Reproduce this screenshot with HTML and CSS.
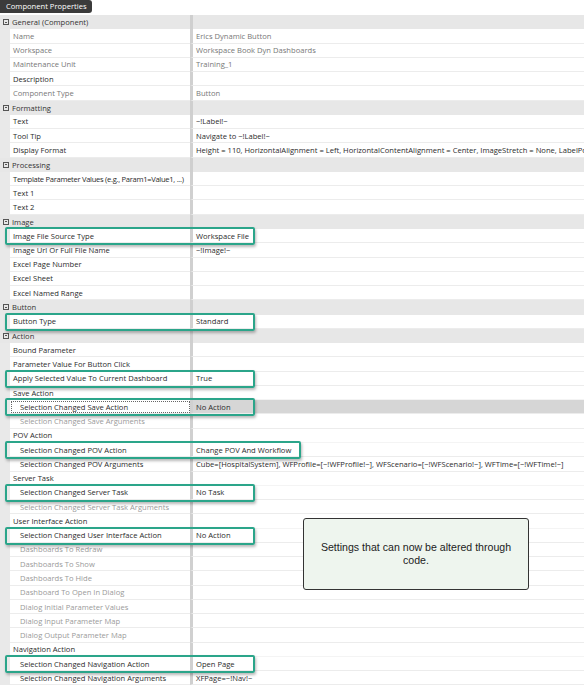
FILE: index.html
```html
<html>
  <head>
    <link rel="stylesheet" href="styles.css">
  </head>
  <body>
    <div class="tab">Component Properties</div>
    <div class="grid">
      <div class="cat"><span class="toggle"></span>General (Component)</div>
      <div class="row dim"><span class="name">Name</span><span class="value">Erics Dynamic Button</span></div>
      <div class="row dim"><span class="name">Workspace</span><span class="value">Workspace Book Dyn Dashboards</span></div>
      <div class="row dim"><span class="name">Maintenance Unit</span><span class="value">Training_1</span></div>
      <div class="row"><span class="name">Description</span><span class="value"></span></div>
      <div class="row dim"><span class="name">Component Type</span><span class="value">Button</span></div>

      <div class="cat"><span class="toggle"></span>Formatting</div>
      <div class="row"><span class="name">Text</span><span class="value">~!Label!~</span></div>
      <div class="row"><span class="name">Tool Tip</span><span class="value">Navigate to ~!Label!~</span></div>
      <div class="row"><span class="name">Display Format</span><span class="value">Height = 110, HorizontalAlignment = Left, HorizontalContentAlignment = Center, ImageStretch = None, LabelPosition = Bottom</span></div>

      <div class="cat"><span class="toggle"></span>Processing</div>
      <div class="row"><span class="name tight">Template Parameter Values (e.g., Param1=Value1, ...)</span><span class="value"></span></div>
      <div class="row"><span class="name">Text 1</span><span class="value"></span></div>
      <div class="row"><span class="name">Text 2</span><span class="value"></span></div>

      <div class="cat"><span class="toggle"></span>Image</div>
      <div class="row hl"><span class="name">Image File Source Type</span><span class="value">Workspace File</span></div>
      <div class="row"><span class="name">Image Url Or Full File Name</span><span class="value">~!Image!~</span></div>
      <div class="row"><span class="name">Excel Page Number</span><span class="value"></span></div>
      <div class="row"><span class="name">Excel Sheet</span><span class="value"></span></div>
      <div class="row"><span class="name">Excel Named Range</span><span class="value"></span></div>

      <div class="cat"><span class="toggle"></span>Button</div>
      <div class="row hl"><span class="name">Button Type</span><span class="value">Standard</span></div>

      <div class="cat"><span class="toggle"></span>Action</div>
      <div class="row"><span class="name">Bound Parameter</span><span class="value"></span></div>
      <div class="row"><span class="name">Parameter Value For Button Click</span><span class="value"></span></div>
      <div class="row hl"><span class="name">Apply Selected Value To Current Dashboard</span><span class="value">True</span></div>

      <div class="row group"><span class="name">Save Action</span><span class="value"></span></div>
      <div class="row sub hl selected"><span class="name">Selection Changed Save Action</span><span class="value">No Action</span></div>
      <div class="row sub off"><span class="name">Selection Changed Save Arguments</span><span class="value"></span></div>

      <div class="row group"><span class="name">POV Action</span><span class="value"></span></div>
      <div class="row sub hl wide"><span class="name">Selection Changed POV Action</span><span class="value">Change POV And Workflow</span></div>
      <div class="row sub"><span class="name">Selection Changed POV Arguments</span><span class="value">Cube=[HospitalSystem], WFProfile=[~!WFProfile!~], WFScenario=[~!WFScenario!~], WFTime=[~!WFTime!~]</span></div>

      <div class="row group"><span class="name">Server Task</span><span class="value"></span></div>
      <div class="row sub hl"><span class="name">Selection Changed Server Task</span><span class="value">No Task</span></div>
      <div class="row sub off"><span class="name">Selection Changed Server Task Arguments</span><span class="value"></span></div>

      <div class="row group"><span class="name">User Interface Action</span><span class="value"></span></div>
      <div class="row sub hl"><span class="name">Selection Changed User Interface Action</span><span class="value">No Action</span></div>
      <div class="row sub off"><span class="name">Dashboards To Redraw</span><span class="value"></span></div>
      <div class="row sub off"><span class="name">Dashboards To Show</span><span class="value"></span></div>
      <div class="row sub off"><span class="name">Dashboards To Hide</span><span class="value"></span></div>
      <div class="row sub off"><span class="name">Dashboard To Open In Dialog</span><span class="value"></span></div>
      <div class="row sub off"><span class="name">Dialog Initial Parameter Values</span><span class="value"></span></div>
      <div class="row sub off"><span class="name">Dialog Input Parameter Map</span><span class="value"></span></div>
      <div class="row sub off"><span class="name">Dialog Output Parameter Map</span><span class="value"></span></div>

      <div class="row group"><span class="name">Navigation Action</span><span class="value"></span></div>
      <div class="row sub hl"><span class="name">Selection Changed Navigation Action</span><span class="value">Open Page</span></div>
      <div class="row sub"><span class="name">Selection Changed Navigation Arguments</span><span class="value">XFPage=~!Nav!~</span></div>

      <div class="note">Settings that can now be altered through code.</div>
    </div>
  </body>
</html>
```

FILE: styles.css
```css
body {
  margin: 0;
  background: #ffffff;
  font-family: "Open Sans", sans-serif;
  font-size: 7.6px;
  color: #2b2b2b;
  overflow: hidden;
}

.tab {
  display: inline-block;
  background: #3b3b3b;
  color: #ffffff;
  padding: 0 5px 0 6px;
  height: 13px;
  line-height: 13px;
  border-radius: 0 3px 3px 0;
  margin-bottom: 2px;
}

.grid {
  position: relative;
}

/* category header rows */
.cat {
  display: flex;
  align-items: center;
  height: 14.28px;
  background: #e7e7e7;
  color: #333;
  background-image: linear-gradient(#cfcfcf, #cfcfcf);
  background-size: 3px 100%;
  background-position: 190px 0;
  background-repeat: no-repeat;
}

.toggle {
  position: relative;
  box-sizing: border-box;
  width: 6px;
  height: 6px;
  border: 1px solid #555;
  margin: 0 3px 0 3px;
}

.toggle::after {
  content: "";
  position: absolute;
  left: 1px;
  top: 1.5px;
  width: 2px;
  height: 1px;
  background: #555;
}

/* property rows */
.row {
  display: flex;
  height: 14.28px;
  box-sizing: border-box;
  padding-left: 10px;
  background: #e9e9e9;
  position: relative;
}

.name,
.value {
  display: flex;
  align-items: center;
  background: #ffffff;
  border-bottom: 1px solid #ececec;
  white-space: nowrap;
  overflow: hidden;
}

.name {
  width: 180px;
  flex: none;
  box-sizing: border-box;
  padding-left: 3px;
}

.name.tight {
  letter-spacing: -0.3px;
}

.value {
  flex: 1;
  border-left: 3px solid #d0d0d0;
  padding-left: 3px;
}

.group .name,
.group .value {
  border-bottom-color: #f4f4f4;
}

.sub .name {
  padding-left: 10px;
}

.dim .name,
.dim .value {
  color: #777;
}

.off .name {
  color: #9a9a9a;
}

.selected .value {
  background: #d6d6d6;
}

.selected .name::before {
  content: "";
  position: absolute;
  left: 11px;
  top: 1px;
  width: 179px;
  height: 12px;
  border: 1px dotted #666;
  box-sizing: border-box;
}

/* teal outline around properties that can be set from code */
.hl::after {
  content: "";
  position: absolute;
  left: 5px;
  top: -2px;
  width: 250px;
  height: 18px;
  box-sizing: border-box;
  border: 2px solid #2ba58a;
  border-radius: 2px;
  box-shadow: 1px 2px 3px rgba(0, 0, 0, 0.28);
  z-index: 2;
}

.hl.wide::after {
  width: 296px;
}

.note {
  position: absolute;
  left: 303px;
  top: 503px;
  width: 226px;
  height: 72px;
  box-sizing: border-box;
  padding: 0 8px;
  display: flex;
  align-items: center;
  justify-content: center;
  text-align: center;
  background: #eef5ee;
  border: 1px solid #333;
  border-radius: 3px;
  font-family: "Liberation Sans", Arial, sans-serif;
  font-size: 10.6px;
  line-height: 13px;
  color: #222;
  z-index: 3;
}
```
